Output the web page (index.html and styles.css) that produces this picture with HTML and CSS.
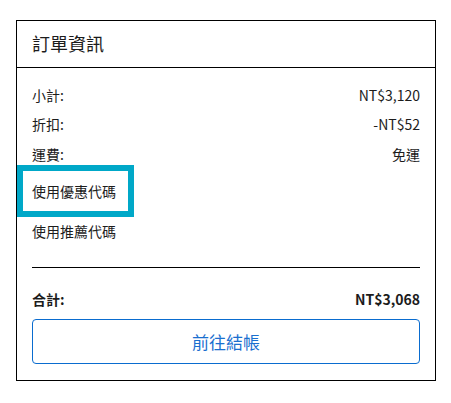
FILE: index.html
```html
<!DOCTYPE html>
<html lang="zh-Hant">
<head>
<meta charset="utf-8">
<title>訂單資訊</title>
<link rel="stylesheet" href="styles.css">
</head>
<body>
<section class="card">
  <header class="card-header">訂單資訊</header>
  <div class="card-body">
    <div class="summary-row"><span>小計:</span><span>NT$3,120</span></div>
    <div class="summary-row"><span>折扣:</span><span>-NT$52</span></div>
    <div class="summary-row"><span>運費:</span><span>免運</span></div>
    <div class="code-row"><a class="code-link is-focused" href="#">使用優惠代碼</a></div>
    <div class="code-row"><a class="code-link" href="#">使用推薦代碼</a></div>
    <hr class="divider">
    <div class="summary-row total"><span>合計:</span><span>NT$3,068</span></div>
    <button class="checkout-btn" type="button">前往結帳</button>
  </div>
</section>
</body>
</html>
```

FILE: styles.css
```css
* { box-sizing: border-box; }
html, body { margin: 0; padding: 0; background: #fff; }
body {
  padding: 20px 15px 0 16px;
  font-family: "Noto Sans CJK TC", "Noto Sans", sans-serif;
  color: #1c1c1c;
}
.card {
  width: 420px;
  border: 1px solid #000;
  background: #fff;
}
.card-header {
  height: 47px;
  display: flex;
  align-items: center;
  padding: 0 15px 2px;
  font-size: 18px;
  border-bottom: 1px solid #000;
}
.card-body {
  padding: 12px 15px 16px;
}
.summary-row {
  display: flex;
  justify-content: space-between;
  align-items: center;
  height: 29.5px;
  font-size: 14px;
}
.code-row {
  height: 40px;
  display: flex;
  align-items: center;
  margin-top: 2px;
}
.code-row + .code-row { margin-top: 0; }
.code-link {
  display: flex;
  align-items: center;
  height: 40px;
  margin-left: -9px;
  padding: 0 12px 0 9px;
  font-size: 14px;
  color: #1c1c1c;
  text-decoration: none;
}
.code-link.is-focused {
  outline: 6px solid #00a8c8;
}
.divider {
  margin: 16px 0 0;
  border: 0;
  border-top: 1px solid #000;
  height: 0;
}
.total {
  margin-top: 16px;
  height: 31px;
  font-weight: 700;
}
.checkout-btn {
  display: block;
  width: 100%;
  height: 45px;
  margin-top: 4px;
  background: #fff;
  border: 1px solid #0a6ccf;
  border-radius: 4px;
  color: #1a6fcf;
  font-family: inherit;
  font-size: 17px;
  cursor: pointer;
}
```
